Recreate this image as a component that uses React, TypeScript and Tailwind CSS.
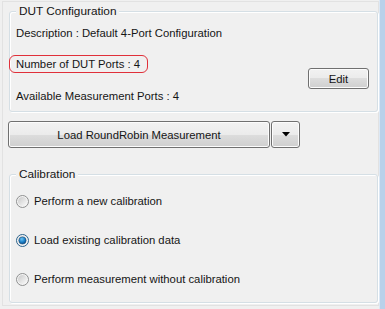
import * as React from 'react'

const btnBg =
  'bg-[linear-gradient(to_bottom,#f2f2f2_0%,#ebebeb_50%,#dddddd_50%,#cfcfcf_100%)] border border-[#707070] rounded-[3px] shadow-[inset_0_0_0_1px_#fcfcfc]'

function Radio({ checked }: { checked?: boolean }) {
  return (
    <svg width="13" height="13" viewBox="0 0 13 13" className="shrink-0">
      <defs>
        <linearGradient id="rbg" x1="0" y1="0" x2="1" y2="1">
          <stop offset="0" stopColor="#c9c9c9" />
          <stop offset="1" stopColor="#fbfbfb" />
        </linearGradient>
        <radialGradient id="rdot" cx="0.4" cy="0.3" r="0.7">
          <stop offset="0" stopColor="#6dc4f4" />
          <stop offset="0.6" stopColor="#1c80c8" />
          <stop offset="1" stopColor="#0c4f8c" />
        </radialGradient>
      </defs>
      <circle cx="6.5" cy="6.5" r="6" fill="#f4f4f4" stroke={checked ? '#2c628b' : '#8e8f8f'} />
      <circle cx="6.5" cy="6.5" r="4.5" fill="url(#rbg)" />
      {checked && <circle cx="6.5" cy="6.5" r="3.6" fill="url(#rdot)" stroke="#1b4f7a" strokeWidth="0.6" />}
    </svg>
  )
}

function RadioRow({ label, checked, className }: { label: string; checked?: boolean; className?: string }) {
  return (
    <label className={'flex items-center gap-[5px] h-[16px] ' + (className || '')}>
      <Radio checked={checked} />
      <span>{label}</span>
    </label>
  )
}

export default function App() {
  return (
    <div className="w-[385px] h-[309px] bg-[#f0f0f0] flex font-['Liberation_Sans',Arial,sans-serif] text-[11.3px] leading-[16px] text-[#151515] whitespace-nowrap">
      <div className="ml-[2px] mt-[1px] w-[377px] h-[305px] border border-[#e2e2e2] flex flex-col">
        <fieldset className="ml-[6px] mt-[1px] w-[369px] border border-[#d5dfe5] rounded-[3px] px-[6px] pb-[7px] pt-0 shadow-[inset_1px_1px_0_#fff,1px_1px_0_#fff]">
          <legend className="px-[3px] bg-[#f0f0f0] leading-[16px] text-[11.8px]">DUT Configuration</legend>
          <div className="mt-[6px]">Description : Default 4-Port Configuration</div>
          <div className="flex justify-between items-start mt-[14px]">
            <div className="flex flex-col">
              <div className="-ml-[7px] pl-[6px] w-[139px] h-[18px] border border-[#e0303a] rounded-[6px]">
                Number of DUT Ports : 4
              </div>
              <div className="mt-[15px]">Available Measurement Ports : 4</div>
            </div>
            <button className={'mt-[13px] mr-[2px] w-[61px] h-[21px] flex items-center justify-center ' + btnBg}>
              Edit
            </button>
          </div>
        </fieldset>

        <div className="flex ml-[5px] mt-[9px] gap-[1px]">
          <button className={'w-[262px] h-[27px] flex items-center justify-center ' + btnBg}>
            Load RoundRobin Measurement
          </button>
          <button className={'w-[29px] h-[27px] flex items-center justify-center ' + btnBg}>
            <svg width="8" height="5" viewBox="0 0 8 5">
              <path d="M0 0 H8 L4 4.5 Z" fill="#000" />
            </svg>
          </button>
        </div>

        <fieldset className="ml-[6px] mt-[18px] w-[369px] border border-[#d5dfe5] rounded-[3px] px-[6px] pb-[15px] pt-0 shadow-[inset_1px_1px_0_#fff,1px_1px_0_#fff]">
          <legend className="px-[3px] bg-[#f0f0f0] leading-[16px] text-[11.8px]">Calibration</legend>
          <RadioRow className="mt-[11px]" label="Perform a new calibration" />
          <RadioRow className="mt-[23px]" label="Load existing calibration data" checked />
          <RadioRow className="mt-[23px]" label="Perform measurement without calibration" />
        </fieldset>
      </div>
      <div className="w-[6px] h-full border-l border-[#dce8f5] bg-[#b9d1ea]" />
    </div>
  )
}
